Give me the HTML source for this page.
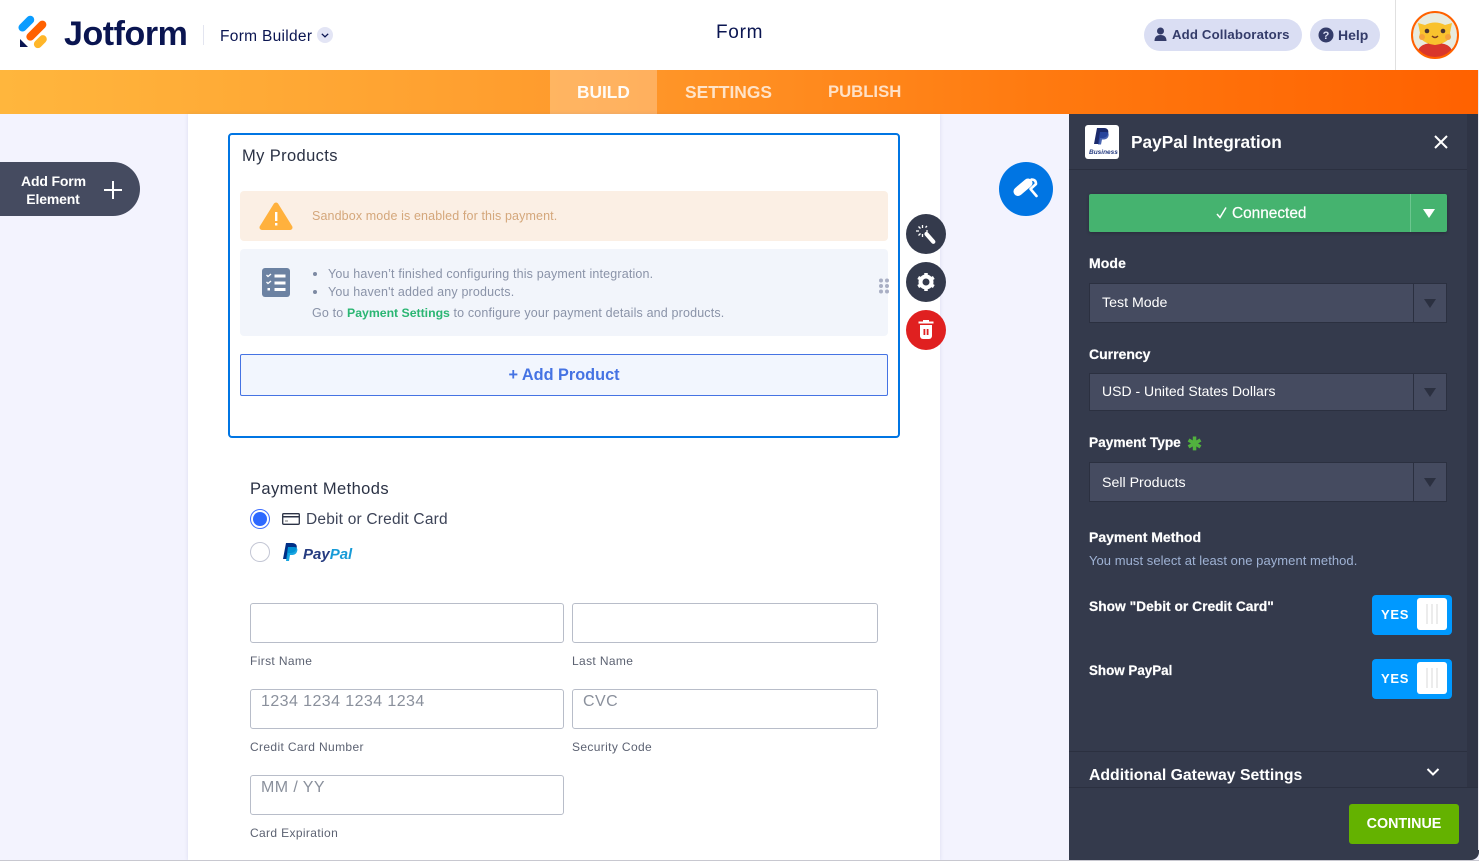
<!DOCTYPE html>
<html><head><meta charset="utf-8"><style>
*{box-sizing:border-box}
html,body{margin:0;padding:0;width:1479px;height:861px;overflow:hidden;background:#f3f3fe;font-family:"Liberation Sans",sans-serif}
.a{position:absolute;white-space:nowrap}
.in{position:absolute;background:#fff;border:1px solid #b8bdc9;border-radius:3px;height:40px;color:#8a909c;font-size:16px;padding:3px 10px;letter-spacing:.42px}
.cap{position:absolute;font-size:12px;color:#5c6272;letter-spacing:.36px;white-space:nowrap}
.sel{position:absolute;left:1089px;width:358px;background:#454b60;border:1px solid #2b3040;color:#fff;font-size:14.2px;padding:0 0 0 12px;display:flex;align-items:center}
.sel i{position:absolute;right:0;top:0;bottom:0;width:33px;border-left:1px solid #2b3040}
.sel i:after{content:"";position:absolute;left:10px;top:50%;margin-top:-4px;border:6px solid transparent;border-top:9px solid #2b3040;border-bottom:0}
.lb{position:absolute;left:1089px;color:#fff;font-weight:bold;font-size:14px;white-space:nowrap;-webkit-text-stroke:.2px #fff}
.tg{position:absolute;left:1372px;width:80px;height:40px;background:#0099ff;border-radius:4px;color:#fff;font-weight:bold;font-size:13px;letter-spacing:.7px;padding:12px 0 0 9px}
.tg b{position:absolute;left:45px;top:3px;width:30px;height:32px;background:#fff;border-radius:3px}
.tg b:after{content:"";position:absolute;left:9px;top:6px;width:12px;height:20px;background:repeating-linear-gradient(90deg,#ececec 0 2px,transparent 2px 5px)}
.c{position:absolute;width:40px;height:40px;border-radius:50%;left:906px;background:#343a4c}
</style></head><body>

<div class="a" style="left:0;top:0;width:1479px;height:70px;background:#fff"></div>
<svg class="a" style="left:18px;top:15px" width="32" height="34" viewBox="0 0 32 34">
<rect x="-1" y="5" width="19" height="8" rx="4" transform="rotate(-45 8 9)" fill="#0a9cff"/>
<rect x="6" y="12" width="25" height="8" rx="4" transform="rotate(-45 18 16)" fill="#ff6100"/>
<rect x="15" y="23" width="15" height="8" rx="4" transform="rotate(-45 22 27)" fill="#ffb629"/>
<path d="M2 24l0 8h8z" fill="#0a1551"/></svg>
<div class="a" style="left:64px;top:13px;font-size:34px;font-weight:bold;color:#0a1551;letter-spacing:-.45px;line-height:42px">Jotform</div>
<div class="a" style="left:203px;top:25px;width:1px;height:20px;background:#e3e5f0"></div>
<div class="a" style="left:220px;top:28px;font-size:15.5px;color:#0a1551;letter-spacing:.3px;line-height:18px">Form Builder</div>
<svg class="a" style="left:317px;top:27px" width="16" height="16"><circle cx="8" cy="8" r="8" fill="#e3e5f5"/><path d="M4.800 6.800L8 9.800l3.200-3" fill="none" stroke="#0a1551" stroke-width="1.300"/></svg>
<div class="a" style="left:716px;top:22px;font-size:19px;color:#0a1551;letter-spacing:.7px;line-height:22px">Form</div>

<div class="a" style="left:1144px;top:19px;width:158px;height:32px;border-radius:16px;background:#dadef3"></div>
<svg class="a" style="left:1153px;top:27px" width="15" height="16" viewBox="0 0 15 16"><circle cx="7.500" cy="4" r="3.500" fill="#343c6a"/><path d="M1.500 14c0-4 2-6 6-6s6 2 6 6z" fill="#343c6a"/></svg>
<div class="a" style="left:1172px;top:27px;font-size:13.2px;font-weight:bold;color:#343c6a;line-height:16px;letter-spacing:.15px">Add Collaborators</div>
<div class="a" style="left:1310px;top:19px;width:70px;height:32px;border-radius:16px;background:#dadef3"></div>
<svg class="a" style="left:1318px;top:27px" width="16" height="16"><circle cx="8" cy="8" r="7.500" fill="#343c6a"/><text x="8" y="12" font-family="Liberation Sans" font-size="11" font-weight="bold" fill="#dadef3" text-anchor="middle">?</text></svg>
<div class="a" style="left:1338px;top:27px;font-size:14px;font-weight:bold;color:#343c6a;line-height:16px">Help</div>
<div class="a" style="left:1395px;top:0;width:1px;height:70px;background:#e0e0e0"></div>
<svg class="a" style="left:1411px;top:11px" width="48" height="48" viewBox="0 0 48 48">
<clipPath id="av"><circle cx="24" cy="24" r="23"/></clipPath>
<circle cx="24" cy="24" r="23" fill="#e8ebdf"/>
<g clip-path="url(#av)"><path d="M6 48c0-10 2-16 18-16s18 6 18 16z" fill="#d9362b"/>
<path d="M7 12l7 2q10-5 20 0l7-2-2 10c1 1 1 10-15 12-16-2-16-11-15-12z" fill="#f9c22e"/>
<circle cx="16" cy="20" r="2.300" fill="#4a3530"/><circle cx="32" cy="20" r="2.300" fill="#4a3530"/>
<circle cx="11" cy="26" r="3" fill="#f5a23c"/><circle cx="37" cy="26" r="3" fill="#f5a23c"/>
<path d="M21 25q3 3 6 0" fill="none" stroke="#7a3a20" stroke-width="1.500"/></g>
<circle cx="24" cy="24" r="23" fill="none" stroke="#ff6100" stroke-width="2"/></svg>

<div class="a" style="left:0;top:70px;width:1479px;height:44px;background:linear-gradient(90deg,#ffb63d 0%,#ff9a2c 40%,#ff7a10 70%,#ff6100 100%)"></div>
<div class="a" style="left:550px;top:70px;width:107px;height:44px;background:rgba(255,255,255,.25)"></div>
<div class="a" style="left:577px;top:82px;font-size:17.3px;font-weight:bold;color:#fff;line-height:20px;opacity:.95">BUILD</div>
<div class="a" style="left:685px;top:82px;font-size:17.4px;font-weight:bold;color:#fff;line-height:20px;opacity:.75">SETTINGS</div>
<div class="a" style="left:828px;top:82px;font-size:16.700px;font-weight:bold;color:#fff;line-height:20px;opacity:.75">PUBLISH</div>

<div class="a" style="left:188px;top:114px;width:752px;height:747px;background:#fff;box-shadow:0 0 4px rgba(80,90,160,.14)"></div>
<div class="a" style="left:0;top:162px;width:140px;height:54px;background:#454b60;border-radius:0 27px 27px 0"></div>
<div class="a" style="left:21px;top:172px;width:64px;text-align:center;font-size:14px;font-weight:bold;color:#fff;line-height:18px;letter-spacing:-.15px">Add Form<br>Element</div>
<div class="a" style="left:104px;top:189px;width:18px;height:2px;background:#fff"></div>
<div class="a" style="left:112px;top:181px;width:2px;height:18px;background:#fff"></div>

<div class="a" style="left:228px;top:133px;width:672px;height:305px;border:2px solid #0075e3;border-radius:4px;background:#fff"></div>
<div class="a" style="left:242px;top:147px;font-size:16.5px;color:#2b3245;letter-spacing:.38px;line-height:19px">My Products</div>
<div class="a" style="left:240px;top:191px;width:648px;height:50px;background:#fbefe4;border-radius:4px"></div>
<svg class="a" style="left:259px;top:201px" width="34" height="31" viewBox="0 0 34 31"><path d="M17 4L31 26.500H3z" fill="#ffb13d" stroke="#ffb13d" stroke-width="5" stroke-linejoin="round"/><rect x="16" y="11" width="2.400" height="9" fill="#fff"/><rect x="16" y="22" width="2.400" height="2.500" fill="#fff"/></svg>
<div class="a" style="left:312px;top:209px;font-size:12.5px;color:#d4a77b;letter-spacing:.12px;line-height:15px">Sandbox mode is enabled for this payment.</div>
<div class="a" style="left:240px;top:249px;width:648px;height:87px;background:#f2f5fb;border-radius:4px"></div>
<svg class="a" style="left:262px;top:268px" width="28" height="29" viewBox="0 0 28 29"><rect width="28" height="29" rx="3" fill="#6c82a2"/><path d="M4.500 7l1.500 1.500L9 6M4.500 14l1.500 1.500L9 13" fill="none" stroke="#fff" stroke-width="1.300"/><rect x="5.500" y="20" width="2.500" height="2.500" fill="#fff"/><rect x="12.500" y="6.500" width="11" height="3" fill="#fff"/><rect x="12.500" y="13.500" width="11" height="3" fill="#fff"/><rect x="12.500" y="20" width="11" height="3" fill="#fff"/></svg>
<div class="a" style="left:313px;top:272px;width:4px;height:4px;border-radius:50%;background:#7d8aa3"></div>
<div class="a" style="left:313px;top:290px;width:4px;height:4px;border-radius:50%;background:#7d8aa3"></div>
<div class="a" style="left:328px;top:267px;font-size:12.5px;color:#8a93a8;letter-spacing:.165px;line-height:15px">You haven’t finished configuring this payment integration.</div>
<div class="a" style="left:328px;top:285px;font-size:12.5px;color:#8a93a8;letter-spacing:.165px;line-height:15px">You haven't added any products.</div>
<div class="a" style="left:312px;top:306px;font-size:12.5px;color:#8a93a8;letter-spacing:.16px;line-height:15px">Go to <b style="color:#2bb673;font-weight:bold;letter-spacing:-.02px;font-size:12.3px">Payment Settings</b> to configure your payment details and products.</div>
<svg class="a" style="left:879px;top:278px" width="10" height="16" fill="#a9afc4"><circle cx="2" cy="2.500" r="2"/><circle cx="8" cy="2.500" r="2"/><circle cx="2" cy="8" r="2"/><circle cx="8" cy="8" r="2"/><circle cx="2" cy="13.500" r="2"/><circle cx="8" cy="13.500" r="2"/></svg>
<div class="a" style="left:240px;top:354px;width:648px;height:42px;background:#f2f6fe;border:1px solid #4573e3;border-radius:2px;text-align:center;color:#4573e3;font-weight:bold;font-size:16.3px;line-height:41px">+ Add Product</div>

<div class="c" style="top:214px"></div>
<svg class="a" style="left:916px;top:224px" width="20" height="20" viewBox="0 0 20 20"><path d="M10.500 10l6.800 7.800" stroke="#fff" stroke-width="4.200" stroke-linecap="round"/><g stroke="#fff" stroke-width="1.300"><path d="M6.500 1v3M6.500 10v3M0 7h3M10 7h2M9.500 3.500l1.500-1.500M2.500 2.500l2 2M2.500 11.500l2-2"/></g></svg>
<div class="c" style="top:262px"></div>
<svg class="a" style="left:916px;top:272px" width="20" height="20" viewBox="0 0 20 20"><circle cx="10" cy="10" r="5.500" fill="none" stroke="#fff" stroke-width="4"/><g stroke="#fff" stroke-width="3.500"><path d="M10 1v3M10 16v3M2.200 5.500l2.600 1.500M15.200 13l2.600 1.500M2.200 14.500l2.600-1.500M15.200 7l2.600-1.500"/></g></svg>
<div class="c" style="top:310px;background:#e02020"></div>
<svg class="a" style="left:917px;top:320px" width="18" height="20" viewBox="0 0 18 20"><rect x="1.500" y="1.500" width="15" height="2" fill="#fff"/><rect x="6" y="0" width="6" height="2" fill="#fff"/><path d="M3 5h12v11a3 3 0 0 1-3 3H6a3 3 0 0 1-3-3z" fill="#fff"/><rect x="6.500" y="9" width="1.800" height="6" fill="#e02020"/><rect x="9.700" y="9" width="1.800" height="6" fill="#e02020"/></svg>

<div class="a" style="left:999px;top:162px;width:54px;height:54px;border-radius:50%;background:#0075e3"></div>
<svg class="a" style="left:1012px;top:176px" width="29" height="27" viewBox="0 0 29 27"><path d="M6 15.500L16 7" stroke="#fff" stroke-width="9" stroke-linecap="round"/><path d="M19.500 3.500Q24 3.500 24 8L18.500 13 24.500 20" fill="none" stroke="#fff" stroke-width="2.600" stroke-linecap="round" stroke-linejoin="round"/></svg>

<div class="a" style="left:250px;top:480px;font-size:16.5px;color:#2b3245;letter-spacing:.4px;line-height:19px">Payment Methods</div>
<div class="a" style="left:250px;top:509px;width:20px;height:20px;border-radius:50%;border:1px solid #3f6fff;background:#fff"></div>
<div class="a" style="left:253px;top:512px;width:14px;height:14px;border-radius:50%;background:#2e69ff"></div>
<svg class="a" style="left:282px;top:513px" width="18" height="12" viewBox="0 0 18 12"><rect x=".7" y=".7" width="16.600" height="10.600" rx="1" fill="none" stroke="#2b3245" stroke-width="1.300"/><rect x="1" y="3" width="16" height="1.500" fill="#2b3245"/><rect x="3" y="7.500" width="3" height="1" fill="#777"/></svg>
<div class="a" style="left:306px;top:511px;font-size:15.5px;color:#3d4458;letter-spacing:.2px;line-height:18px">Debit or Credit Card</div>
<div class="a" style="left:250px;top:542px;width:20px;height:20px;border-radius:50%;border:1px solid #c3c6d4;background:#fff"></div>
<svg class="a" style="left:283px;top:543px" width="15" height="18" viewBox="0 0 15 18"><path d="M3 0h6c4 0 5.500 2.500 4.500 5.500C12.500 9 10 10 7 10H5l-1 6H0z" fill="#002f86"/><path d="M5 4h6c3 0 4 2 3 4.500-1 3-3 3.500-5.500 3.500H7l-1 6H3z" fill="#009cde" opacity=".9"/></svg>
<div class="a" style="left:303px;top:546px;font-size:15px;font-weight:bold;font-style:italic;line-height:17px;color:#253b80">Pay<span style="color:#179bd7">Pal</span></div>

<div class="in" style="left:250px;top:603px;width:314px"></div>
<div class="in" style="left:572px;top:603px;width:306px"></div>
<div class="cap" style="left:250px;top:654px">First Name</div>
<div class="cap" style="left:572px;top:654px">Last Name</div>
<div class="in" style="left:250px;top:689px;width:314px">1234 1234 1234 1234</div>
<div class="in" style="left:572px;top:689px;width:306px">CVC</div>
<div class="cap" style="left:250px;top:740px">Credit Card Number</div>
<div class="cap" style="left:572px;top:740px">Security Code</div>
<div class="in" style="left:250px;top:775px;width:314px">MM / YY</div>
<div class="cap" style="left:250px;top:826px">Card Expiration</div>

<div class="a" style="left:0;top:860px;width:1479px;height:1px;background:#c8c8d0"></div>
<div class="a" style="left:1069px;top:114px;width:410px;height:746px;background:#343a4c;border-radius:0 0 8px 0"></div>
<div class="a" style="left:1467px;top:114px;width:11px;height:673px;background:#2f3445"></div>
<div class="a" style="left:1478px;top:70px;width:1px;height:780px;background:#e8e8ee"></div>
<div class="a" style="left:1069px;top:169px;width:398px;height:1px;background:#2b3040"></div>
<div class="a" style="left:1085px;top:125px;width:34px;height:34px;background:#fff;border-radius:3px"></div>
<svg class="a" style="left:1094px;top:128px" width="16" height="20" viewBox="0 0 16 20"><path d="M3 0h7c4 0 5 3 4 6-1 3-3 4-6 4H6l-1 6H0z" fill="#1b2a6b"/><path d="M6 4h6c2.500 0 3 2 2.500 4-1 3-3 3.500-5.500 3.500H8l-1 5H4z" fill="#2a4aa5" opacity=".85"/></svg>
<div class="a" style="left:1089px;top:149px;width:26px;text-align:center;font-size:6.500px;font-weight:bold;font-style:italic;color:#253b80;line-height:8px">Business</div>
<div class="a" style="left:1131px;top:131px;font-size:17.3px;font-weight:bold;color:#fff;line-height:22px">PayPal Integration</div>
<svg class="a" style="left:1434px;top:135px" width="14" height="14"><path d="M1 1l12 12M13 1L1 13" stroke="#fff" stroke-width="2"/></svg>

<div class="a" style="left:1089px;top:194px;width:358px;height:38px;background:#45b36f;border-radius:2px;box-shadow:0 1px 3px rgba(0,0,0,.25)"></div>
<div class="a" style="left:1410px;top:194px;width:1px;height:38px;background:#6cc68f"></div>
<svg class="a" style="left:1215px;top:206px" width="13" height="14"><path d="M2 8l3 3.500L11 1.500" fill="none" stroke="#fff" stroke-width="1.500"/></svg>
<div class="a" style="left:1232px;top:205px;font-size:15.4px;color:#fff;line-height:18px;-webkit-text-stroke:.2px #fff">Connected</div>
<div class="a" style="left:1423px;top:209px;border:6px solid transparent;border-top:9px solid #fff;border-bottom:0"></div>

<div class="lb" style="top:255px;letter-spacing:.1px">Mode</div>
<div class="sel" style="top:283px;height:40px">Test Mode<i></i></div>
<div class="lb" style="top:346px">Currency</div>
<div class="sel" style="top:373px;height:38px;font-size:14px;padding-bottom:2px">USD - United States Dollars<i></i></div>
<div class="lb" style="top:435px;font-size:13.7px">Payment Type</div>
<div class="a" style="left:1187px;top:432px;font-size:18px;font-weight:bold;color:#51b13e;line-height:24px">✱</div>
<div class="sel" style="top:462px;height:40px;padding-top:2px">Sell Products<i></i></div>
<div class="lb" style="top:529px">Payment Method</div>
<div class="a" style="left:1089px;top:553px;font-size:13px;color:#9fb2d4;line-height:16px;letter-spacing:.05px">You must select at least one payment method.</div>
<div class="lb" style="top:599px;font-size:13.8px">Show "Debit or Credit Card"</div>
<div class="tg" style="top:595px">YES<b></b></div>
<div class="lb" style="top:663px;font-size:13.4px">Show PayPal</div>
<div class="tg" style="top:659px">YES<b></b></div>

<div class="a" style="left:1069px;top:751px;width:398px;height:1px;background:#2b3040"></div>
<div class="a" style="left:1089px;top:766px;font-size:15.8px;font-weight:bold;color:#fff;line-height:19px">Additional Gateway Settings</div>
<svg class="a" style="left:1426px;top:767px" width="14" height="11"><path d="M1.500 2L7 7.500 12.500 2" fill="none" stroke="#fff" stroke-width="2"/></svg>
<div class="a" style="left:1069px;top:787px;width:409px;height:1px;background:#2b3040"></div>
<div class="a" style="left:1349px;top:804px;width:110px;height:40px;background:#64b200;border-radius:3px;color:#fff;font-weight:bold;font-size:14.3px;text-align:center;line-height:40px">CONTINUE</div>
</body></html>
